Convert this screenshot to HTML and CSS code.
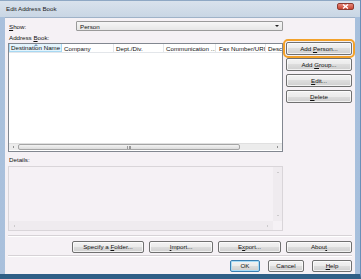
FILE: index.html
```html
<!DOCTYPE html>
<html lang="en">
<head>
    <meta charset="UTF-8">
    <title>Edit Address Book</title>
    <link rel="stylesheet" href="styles.css">
</head>
<body>
    <div class="window">
        <div class="titlebar">
            <span class="title">Edit Address Book</span>
            <span class="close">
                <svg width="7" height="5" viewBox="0 0 7 5"><path d="M1 0.5 L6 4.5 M6 0.5 L1 4.5" stroke="#fff" stroke-width="1.4"/></svg>
            </span>
        </div>

        <div class="client">
            <div class="top">
                <div class="left">
                    <div class="show-row">
                        <label class="show-label"><u>S</u>how:</label>
                        <div class="select">
                            <span>Person</span>
                            <span class="arrow"></span>
                        </div>
                    </div>

                    <div class="caption caption-book">Address <u>B</u>ook:</div>

                    <div class="list">
                        <div class="list-head">
                            <div class="col col-name sorted"><span>Destination Name</span><span class="sort"></span></div>
                            <div class="col col-company"><span>Company</span></div>
                            <div class="col col-dept"><span>Dept./Div.</span></div>
                            <div class="col col-comm"><span>Communication ...</span></div>
                            <div class="col col-fax"><span>Fax Number/URI</span></div>
                            <div class="col col-desc"><span>Desc</span></div>
                        </div>
                        <div class="list-body"></div>
                        <div class="hscroll">
                            <span class="sarrow left"></span>
                            <div class="track">
                                <div class="thumb"><span class="grip"></span></div>
                            </div>
                            <span class="sarrow right"></span>
                        </div>
                    </div>

                    <div class="caption caption-details">Details:</div>

                    <div class="details">
                        <div class="details-main">
                            <div class="details-body"></div>
                            <div class="vscroll">
                                <span class="sarrow up"></span>
                                <span class="sarrow down"></span>
                            </div>
                        </div>
                        <div class="details-bottom">
                            <div class="hscroll-flat">
                                <span class="sarrow left dim"></span>
                                <span class="sarrow right dim"></span>
                            </div>
                            <div class="corner"></div>
                        </div>
                    </div>
                </div>

                <div class="side">
                    <button class="btn focused">Add <u>P</u>erson...</button>
                    <button class="btn">Add <u>G</u>roup...</button>
                    <button class="btn"><u>E</u>dit...</button>
                    <button class="btn"><u>D</u>elete</button>
                </div>
            </div>

            <div class="sep"></div>

            <div class="row-buttons">
                <button class="btn btn-folder">Specify a <u>F</u>older...</button>
                <button class="btn btn-import"><u>I</u>mport...</button>
                <button class="btn btn-export">E<u>x</u>port...</button>
                <button class="btn btn-about">Abou<u>t</u></button>
            </div>

            <div class="sep sep-low"></div>

            <div class="dialog-buttons">
                <button class="btn btn-ok default">OK</button>
                <button class="btn btn-cancel">Cancel</button>
                <button class="btn btn-help"><u>H</u>elp</button>
            </div>
        </div>
    </div>
</body>
</html>
```

FILE: styles.css
```css
:root {
    --client-bg: #f5f1f5;
    --border-dark: #828790;
    --text: #111;
}

* {
    box-sizing: border-box;
    margin: 0;
    padding: 0;
}

body {
    width: 361px;
    height: 279px;
    overflow: hidden;
    font-family: 'Liberation Sans', Arial, sans-serif;
    font-size: 6.2px;
    color: var(--text);
    background: #fff;
}

u {
    text-decoration: underline;
    text-underline-offset: 1px;
}

.window {
    width: 361px;
    height: 279px;
    display: flex;
    flex-direction: column;
    background: linear-gradient(to right, #a9c0dc, #c4d4e6 50%, #a6bfdc);
    border-bottom: 5px solid #2f5f86;
    border-right: 1px solid #6a8fb8;
}

/* Title bar */
.titlebar {
    height: 17px;
    display: flex;
    align-items: center;
    justify-content: space-between;
    padding: 0 6px 2px 6px;
    background: linear-gradient(#d9e2ec, #c9d6e4);
    border-top: 1px solid #8fa8c4;
}

.title {
    color: #1a1a1a;
}

.close {
    width: 17px;
    height: 7px;
    margin-top: -3px;
    border-radius: 2px;
    background: linear-gradient(#e5887a, #c9432f);
    border: 1px solid #8e3a30;
    display: flex;
    align-items: center;
    justify-content: center;
}

/* Client area */
.client {
    flex: 1;
    margin: 0 5px;
    padding: 0 3px;
    background: var(--client-bg);
    display: flex;
    flex-direction: column;
    border-top: 1px solid #9fb2c8;
}

.top {
    display: flex;
    gap: 3px;
}

.left {
    width: 275px;
    display: flex;
    flex-direction: column;
}

.show-row {
    display: flex;
    align-items: center;
    margin-top: 3px;
    height: 10px;
}

.show-label {
    width: 68px;
    padding-left: 1px;
}

.select {
    flex: 1;
    height: 10px;
    display: flex;
    align-items: center;
    justify-content: space-between;
    padding: 0 3px;
    border: 1px solid #9a9a9a;
    border-radius: 1px;
    background: linear-gradient(#f6f6f6, #e6e6e6);
}

.arrow {
    width: 0;
    height: 0;
    border-left: 2px solid transparent;
    border-right: 2px solid transparent;
    border-top: 2px solid #222;
}

.caption {
    line-height: 8px;
    padding-left: 1px;
}

.caption-book {
    height: 12px;
    padding-top: 3px;
}

.caption-details {
    height: 14px;
    padding-top: 4px;
}

/* Address list */
.list {
    height: 109px;
    border: 1px solid var(--border-dark);
    background: #fff;
    display: flex;
    flex-direction: column;
}

.list-head {
    height: 9px;
    display: flex;
    border-bottom: 1px solid #e3e6ea;
}

.col {
    position: relative;
    display: flex;
    align-items: center;
    padding-left: 2px;
    border-right: 1px solid #e3e6ea;
    white-space: nowrap;
    overflow: hidden;
}

.col-name { width: 53px; padding-left: 1px; }
.col-company { width: 52px; }
.col-dept { width: 50px; }
.col-comm { width: 52px; }
.col-fax { width: 50px; padding-left: 3px; }
.col-desc { flex: 1; border-right: none; }

.sorted {
    background: #e3f4fc;
    border: 1px solid #a8d9f3;
    border-top: none;
}

.sort {
    position: absolute;
    top: 0;
    left: 24px;
    width: 0;
    height: 0;
    border-left: 2px solid transparent;
    border-right: 2px solid transparent;
    border-bottom: 2px solid #7a9cc0;
}

.list-body {
    flex: 1;
}

.hscroll {
    height: 7px;
    display: flex;
    align-items: center;
    background: #ececec;
    border-top: 1px solid #e0e0e0;
    margin-bottom: 1px;
}

.sarrow {
    width: 9px;
    height: 7px;
    display: flex;
    align-items: center;
    justify-content: center;
}

.sarrow::before {
    content: '';
    width: 0;
    height: 0;
}

.sarrow.left::before {
    border-top: 1.5px solid transparent;
    border-bottom: 1.5px solid transparent;
    border-right: 1.5px solid #333;
}

.sarrow.right::before {
    border-top: 1.5px solid transparent;
    border-bottom: 1.5px solid transparent;
    border-left: 1.5px solid #333;
}

.sarrow.up::before {
    border-left: 1.5px solid transparent;
    border-right: 1.5px solid transparent;
    border-bottom: 1.5px solid #aaa;
}

.sarrow.down::before {
    border-left: 1.5px solid transparent;
    border-right: 1.5px solid transparent;
    border-top: 1.5px solid #aaa;
}

.sarrow.left.dim::before { border-right-color: #aaa; }
.sarrow.right.dim::before { border-left-color: #aaa; }

.track {
    flex: 1;
    height: 7px;
    display: flex;
    align-items: center;
}

.thumb {
    width: 222px;
    height: 6px;
    border: 1px solid #a5a5a5;
    border-radius: 2px;
    background: linear-gradient(#f3f3f3, #dcdcdc);
    display: flex;
    align-items: center;
    justify-content: center;
}

.grip {
    width: 4px;
    height: 3px;
    border-left: 1px solid #999;
    border-right: 1px solid #999;
    position: relative;
}

.grip::after {
    content: '';
    position: absolute;
    left: 0.5px;
    top: 0;
    width: 1px;
    height: 3px;
    background: #999;
}

/* Details box */
.details {
    height: 65px;
    border: 1px solid #d9d5d9;
    display: flex;
    flex-direction: column;
    background: var(--client-bg);
}

.details-main {
    flex: 1;
    display: flex;
}

.details-body {
    flex: 1;
}

.vscroll {
    width: 9px;
    display: flex;
    flex-direction: column;
    justify-content: space-between;
    padding: 2px 0;
    background: #efebef;
}

.details-bottom {
    height: 9px;
    display: flex;
}

.hscroll-flat {
    flex: 1;
    display: flex;
    align-items: center;
    justify-content: space-between;
    background: #efebef;
    padding: 0 1px;
}

.corner {
    width: 9px;
    background: var(--client-bg);
}

/* Buttons */
.side {
    width: 66px;
    display: flex;
    flex-direction: column;
    gap: 3px;
    padding-top: 24px;
}

.btn {
    height: 13px;
    padding: 0;
    font-family: 'Liberation Sans', Arial, sans-serif;
    font-size: 6.2px;
    line-height: 8px;
    color: var(--text);
    text-align: center;
    border: 1px solid #707070;
    border-radius: 2px;
    background: linear-gradient(#f2f2f2 0%, #ebebeb 50%, #dddddd 50%, #cfcfcf 100%);
    box-shadow: inset 0 0 0 1px rgba(255, 255, 255, 0.7);
    white-space: nowrap;
}

.btn.focused {
    outline: 2px solid #f2a12a;
    outline-offset: 1px;
}

.btn.default {
    border-color: #3c7fb1;
    box-shadow: inset 0 0 0 1px #a9dcf7;
}

.sep {
    margin-top: 4px;
    height: 2px;
    border-top: 1px solid #d6d2d6;
    border-bottom: 1px solid #fff;
}

.sep-low {
    margin-top: 2px;
}

.row-buttons {
    margin-top: 4px;
    display: flex;
    justify-content: flex-end;
    gap: 5px;
}

.row-buttons .btn {
    height: 12px;
}

.btn-folder { width: 72px; }
.btn-import { width: 64px; }
.btn-export { width: 63px; }
.btn-about { width: 66px; }

.dialog-buttons {
    margin-top: 3px;
    display: flex;
    justify-content: flex-end;
    gap: 8px;
}

.dialog-buttons .btn {
    height: 12px;
}

.btn-ok { width: 30px; }
.btn-cancel { width: 36px; }
.btn-help { width: 40px; }
```
